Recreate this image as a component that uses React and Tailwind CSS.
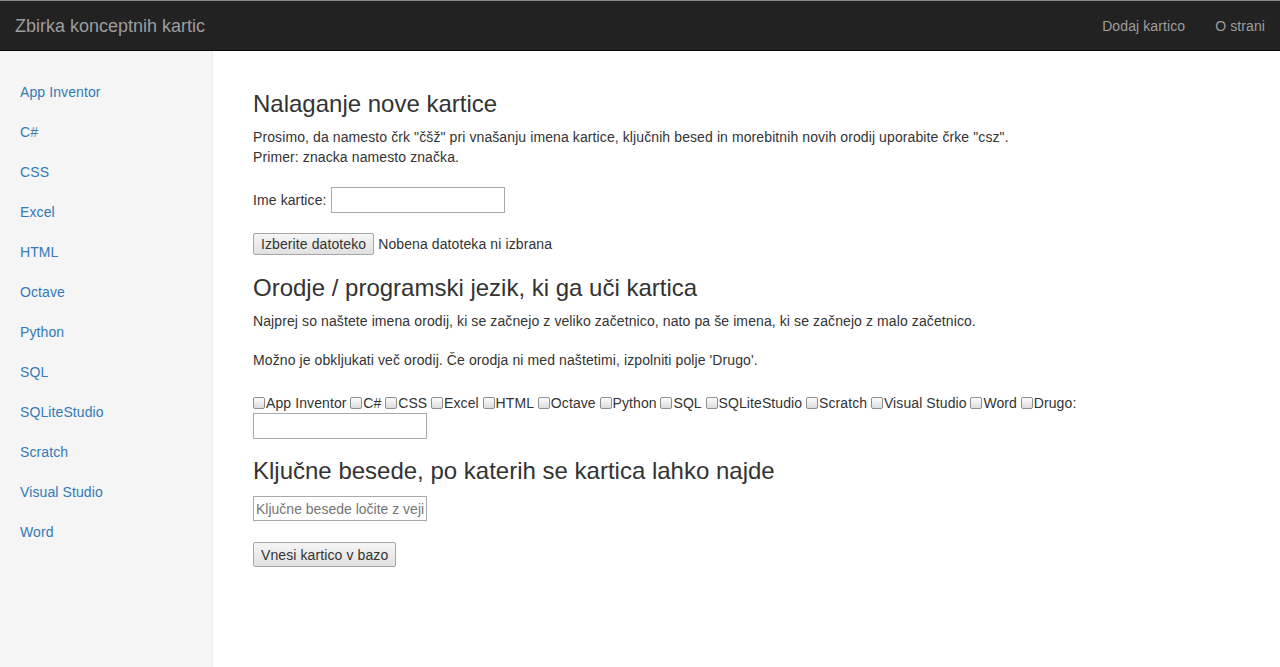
import React, { useState } from "react";

const tools = [
  "App Inventor",
  "C#",
  "CSS",
  "Excel",
  "HTML",
  "Octave",
  "Python",
  "SQL",
  "SQLiteStudio",
  "Scratch",
  "Visual Studio",
  "Word",
];

const Check = ({ checked, onChange }) => (
  <input
    type="checkbox"
    checked={checked}
    onChange={onChange}
    className="appearance-none w-[12px] h-[12px] border border-[#8f8f8f] rounded-[2px] bg-gradient-to-b from-[#fcfcfc] to-[#dcdcdc] align-[-1px] m-0 mr-[1px] checked:bg-[#4a90e2]"
  />
);

const App = () => {
  const [name, setName] = useState("");
  const [selected, setSelected] = useState([]);
  const [other, setOther] = useState(false);
  const [otherText, setOtherText] = useState("");
  const [keywords, setKeywords] = useState("");

  // toggle a tool in the list
  const toggle = (t) => {
    setSelected((prev) =>
      prev.includes(t) ? prev.filter((x) => x !== t) : [...prev, t]
    );
  };

  return (
    <div className="min-h-[667px] bg-white text-[#333] text-[14px] leading-[20px] tracking-[0.1px] font-['Liberation_Sans',Arial,sans-serif]">
      {/* Navbar */}
      <nav className="h-[51px] bg-[#222] border-t border-[#8c8c8c] border-b border-b-[#080808] flex items-center justify-between">
        <a href="#" className="px-[15px] text-[18px] leading-[20px] tracking-normal text-[#9d9d9d]">
          Zbirka konceptnih kartic
        </a>
        <ul className="flex">
          <li>
            <a href="#" className="block px-[15px] py-[15px] text-[#9d9d9d]">
              Dodaj kartico
            </a>
          </li>
          <li>
            <a href="#" className="block px-[15px] py-[15px] text-[#9d9d9d]">
              O strani
            </a>
          </li>
        </ul>
      </nav>

      <div className="flex">
        {/* Sidebar */}
        <div className="w-[213px] shrink-0 min-h-[616px] bg-[#f5f5f5] border-r border-[#eee] pt-[21px]">
          <ul>
            {tools.map((t) => (
              <li key={t}>
                <a href="#" className="block px-[20px] py-[10px] text-[#337ab7]">
                  {t}
                </a>
              </li>
            ))}
          </ul>
        </div>

        {/* Main */}
        <div className="flex-1 pl-[40px] pt-[40px]">
          <h3 className="text-[24px] leading-[26px] tracking-normal font-normal">
            Nalaganje nove kartice
          </h3>
          <p className="mt-[10px]">
            Prosimo, da namesto črk "čšž" pri vnašanju imena kartice, ključnih besed in morebitnih novih orodij uporabite črke "csz".
            <br />
            Primer: znacka namesto značka.
          </p>

          <div className="mt-[20px] flex items-center h-[26px]">
            <span>Ime kartice:</span>
            <input
              type="text"
              value={name}
              onChange={(e) => setName(e.target.value)}
              className="ml-[4px] w-[174px] h-[26px] border border-[#a9a9a9] px-[2px] outline-none"
            />
          </div>

          <div className="mt-[20px] flex items-center h-[22px]">
            <button className="h-[22px] px-[7px] border border-[#a6a6a6] rounded-[2px] bg-gradient-to-b from-[#f5f5f5] to-[#e1e1e1] text-[14px] leading-[18px] text-[#333]">
              Izberite datoteko
            </button>
            <span className="ml-[4px]">Nobena datoteka ni izbrana</span>
          </div>

          <h3 className="mt-[20px] text-[24px] leading-[26px] tracking-normal font-normal">
            Orodje / programski jezik, ki ga uči kartica
          </h3>
          <p className="mt-[10px]">
            Najprej so naštete imena orodij, ki se začnejo z veliko začetnico, nato pa še imena, ki se začnejo z malo začetnico.
          </p>
          <p className="mt-[19px]">
            Možno je obkljukati več orodij. Če orodja ni med naštetimi, izpolniti polje 'Drugo'.
          </p>

          <div className="mt-[23px] max-w-[840px]">
            {tools.map((t) => (
              <label key={t} className="mr-[3.75px]">
                <Check checked={selected.includes(t)} onChange={() => toggle(t)} />
                {t}
              </label>
            ))}
            <label>
              <Check checked={other} onChange={() => setOther(!other)} />
              Drugo:
            </label>
            <div>
              <input
                type="text"
                value={otherText}
                onChange={(e) => setOtherText(e.target.value)}
                className="w-[174px] h-[26px] border border-[#a9a9a9] px-[2px] outline-none block"
              />
            </div>
          </div>

          <h3 className="mt-[19px] text-[24px] leading-[26px] tracking-normal font-normal">
            Ključne besede, po katerih se kartica lahko najde
          </h3>
          <input
            type="text"
            value={keywords}
            onChange={(e) => setKeywords(e.target.value)}
            placeholder="Ključne besede ločite z vejico"
            className="mt-[12px] block w-[174px] h-[25px] border border-[#a9a9a9] px-[2px] tracking-normal outline-none placeholder:text-[#757575]"
          />

          <button className="mt-[21px] h-[25px] px-[7px] border border-[#a6a6a6] rounded-[2px] bg-gradient-to-b from-[#f5f5f5] to-[#e1e1e1] text-[14px] leading-[18px] text-[#333]">
            Vnesi kartico v bazo
          </button>
        </div>
      </div>
    </div>
  );
};

export default App;
